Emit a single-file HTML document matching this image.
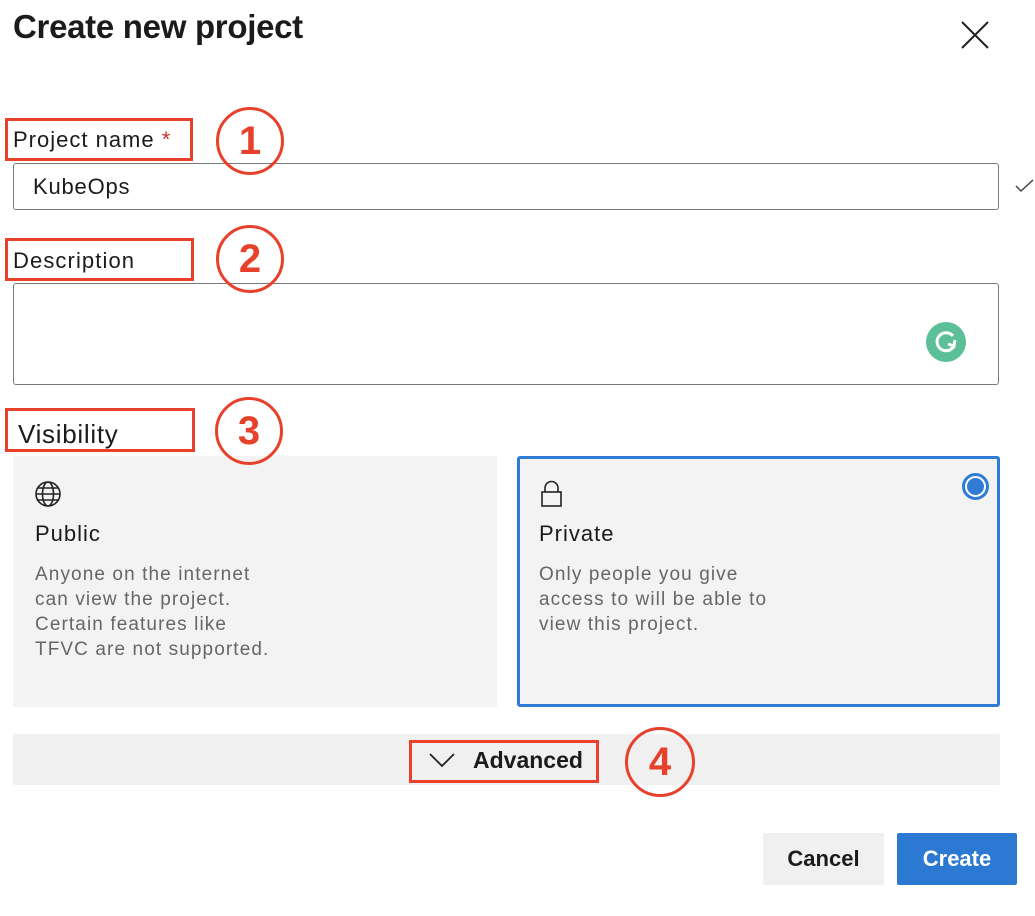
<!DOCTYPE html>
<html><head><meta charset="utf-8"><style>
*{margin:0;padding:0;box-sizing:border-box}
body{width:1035px;height:916px;background:#fff;font-family:"Liberation Sans",sans-serif;position:relative;overflow:hidden;color:#1b1b1b}
.a{position:absolute}
.red{position:absolute;border:3px solid #e8412b;z-index:2}
.circ{position:absolute;border:3px solid #e8412b;border-radius:50%;color:#e8412b;font-weight:bold;font-size:40px;display:flex;align-items:center;justify-content:center;z-index:2;background:transparent}
.t{position:absolute;white-space:nowrap;z-index:3}
.desc{font-size:19px;color:#666;line-height:25px;letter-spacing:1.1px}
</style></head><body>
<div class="t" style="left:13px;top:8px;font-size:33px;font-weight:bold;letter-spacing:-0.3px">Create new project</div>
<svg class="a" style="left:960px;top:20px" width="30" height="30"><path d="M2 2L28 28M28 2L2 28" stroke="#222" stroke-width="2"/></svg>

<div class="red" style="left:5px;top:118px;width:188px;height:43px"></div>
<div class="t" style="left:13px;top:127px;font-size:22px;letter-spacing:1px">Project name <span style="color:#b33">*</span></div>
<div class="circ" style="left:216px;top:107px;width:68px;height:68px">1</div>
<div class="a" style="left:13px;top:163px;width:986px;height:47px;border:1.5px solid #7a7a7a;border-radius:3px"></div>
<div class="t" style="left:33px;top:174px;font-size:22px;letter-spacing:0.8px">KubeOps</div>
<svg class="a" style="left:1015px;top:178px" width="20" height="16"><path d="M1 8L6 13L18 2" stroke="#444" stroke-width="1.5" fill="none"/></svg>

<div class="red" style="left:5px;top:238px;width:189px;height:43px"></div>
<div class="t" style="left:13px;top:248px;font-size:22px;letter-spacing:1.1px">Description</div>
<div class="circ" style="left:216px;top:225px;width:68px;height:68px">2</div>
<div class="a" style="left:13px;top:283px;width:986px;height:102px;border:1.5px solid #7a7a7a;border-radius:3px"></div>
<div class="a" style="left:926px;top:322px;width:40px;height:40px;border-radius:50%;background:#5bbf98"></div>
<svg class="a" style="left:926px;top:322px" width="40" height="40"><path d="M27 14A9 9 0 1 0 28 24M22 22L28 24L29 18" stroke="#fff" stroke-width="3" fill="none"/></svg>

<div class="red" style="left:5px;top:408px;width:190px;height:44px"></div>
<div class="t" style="left:18px;top:419px;font-size:26px;letter-spacing:0.7px">Visibility</div>
<div class="circ" style="left:215px;top:397px;width:68px;height:68px">3</div>

<div class="a" style="left:13px;top:456px;width:484px;height:251px;background:#f3f3f3;border-radius:2px"></div>
<svg class="a" style="left:34px;top:480px" width="28" height="28" fill="none" stroke="#222" stroke-width="1.6"><circle cx="14" cy="14" r="12"/><ellipse cx="14" cy="14" rx="5.5" ry="12"/><path d="M2 14H26M4 8H24M4 20H24"/></svg>
<div class="t" style="left:35px;top:521px;font-size:22px;letter-spacing:1px">Public</div>
<div class="t desc" style="left:35px;top:562px">Anyone on the internet<br>can view the project.<br>Certain features like<br>TFVC are not supported.</div>

<div class="a" style="left:517px;top:456px;width:483px;height:251px;background:#f3f3f3;border:3px solid #2f7bd6;border-radius:3px"></div>
<svg class="a" style="left:540px;top:480px" width="24" height="28" fill="none" stroke="#222" stroke-width="1.6"><path d="M5 12V8A6.5 6.5 0 0 1 18 8V12"/><rect x="2" y="12" width="19" height="14"/></svg>
<div class="a" style="left:962px;top:473px;width:27px;height:27px;border-radius:50%;border:3px solid #2f7bd6;background:#fff"></div>
<div class="a" style="left:967px;top:478px;width:17px;height:17px;border-radius:50%;background:#2f7bd6"></div>
<div class="t" style="left:539px;top:521px;font-size:22px;letter-spacing:1px">Private</div>
<div class="t desc" style="left:539px;top:562px">Only people you give<br>access to will be able to<br>view this project.</div>

<div class="a" style="left:13px;top:734px;width:987px;height:51px;background:#f0f0f0;border-radius:2px"></div>
<div class="red" style="left:409px;top:740px;width:190px;height:43px"></div>
<svg class="a" style="left:428px;top:750px" width="30" height="20"><path d="M2 4L14 16L26 4" stroke="#222" stroke-width="1.8" fill="none"/></svg>
<div class="t" style="left:473px;top:747px;font-size:23px;font-weight:bold">Advanced</div>
<div class="circ" style="left:625px;top:727px;width:70px;height:70px">4</div>

<div class="a" style="left:763px;top:833px;width:121px;height:52px;background:#f0f0f0;border-radius:2px;font-size:22px;font-weight:bold;display:flex;align-items:center;justify-content:center">Cancel</div>
<div class="a" style="left:897px;top:833px;width:120px;height:52px;background:#2b79d3;border-radius:2px;color:#fff;font-size:22px;font-weight:bold;display:flex;align-items:center;justify-content:center">Create</div>
</body></html>
